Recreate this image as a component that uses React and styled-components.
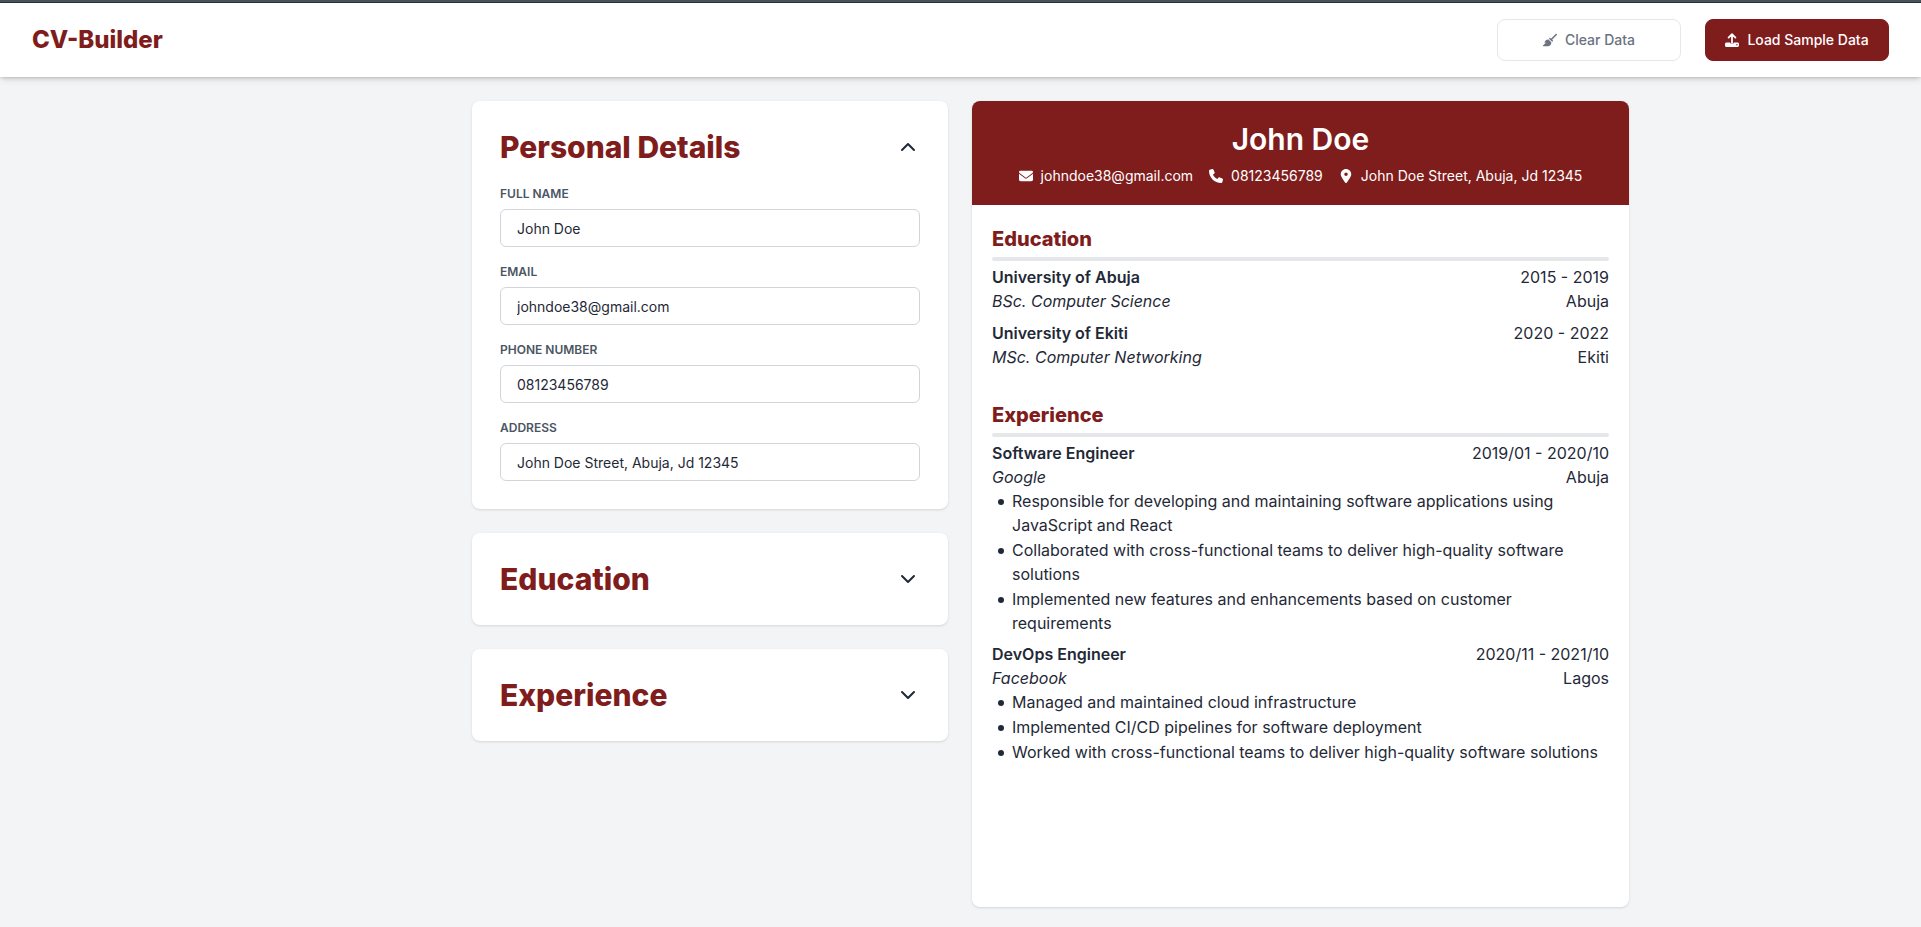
import React, { useState } from 'react';
import styled, { createGlobalStyle } from 'styled-components';
import { FaBroom, FaEnvelope, FaLocationDot, FaPhone } from 'react-icons/fa6';
import { FiChevronDown, FiChevronUp } from 'react-icons/fi';

const GlobalStyle = createGlobalStyle`
  *, *::before, *::after { box-sizing: border-box; }
  body {
    margin: 0;
    background: #f3f4f6;
    color: #1f2937;
    font-family: Inter, 'Liberation Sans', sans-serif;
    font-size: 16px;
    line-height: 24px;
  }
  h1, h2, h3, p, ul { margin: 0; }
  button, input { font: inherit; color: inherit; }
`;

const Page = styled.div`
  display: flex;
  flex-direction: column;
  min-height: 100vh;
`;

const Header = styled.header`
  display: flex;
  align-items: center;
  justify-content: space-between;
  padding: 17px 32px 16px;
  background: #fff;
  border-top: 2px solid #48525a;
  box-shadow: inset 0 1px 0 #26343a, 0 4px 6px -1px rgba(0, 0, 0, 0.1),
    0 2px 4px -2px rgba(0, 0, 0, 0.1), 0 1px 3px rgba(0, 0, 0, 0.1);
`;

const Brand = styled.h1`
  color: #7f1d1d;
  font-size: 24px;
  line-height: 32px;
  font-weight: 800;
`;

const Actions = styled.div`
  display: flex;
  gap: 24px;
`;

const ActionButton = styled.button`
  display: flex;
  align-items: center;
  justify-content: center;
  gap: 8px;
  width: 184px;
  height: 42px;
  padding: 0;
  border: 1px solid ${(p) => (p.$primary ? '#7f1d1d' : '#e5e7eb')};
  border-radius: 8px;
  background: ${(p) => (p.$primary ? '#7f1d1d' : '#fff')};
  color: ${(p) => (p.$primary ? '#fff' : '#6b7280')};
  font-size: 14px;
  line-height: 20px;
  font-weight: 500;
  cursor: pointer;

  svg {
    width: auto;
    height: 14px;
  }
`;

const Main = styled.main`
  flex: 1;
  display: grid;
  grid-template-columns: minmax(0, 476px) minmax(0, 657px);
  justify-content: center;
  gap: 24px;
  padding: 24px 0 20px 180px;
`;

const Editor = styled.div`
  display: flex;
  flex-direction: column;
  gap: 24px;
`;

const Card = styled.section`
  padding: 28px;
  border-radius: 8px;
  background: #fff;
  box-shadow: 0 1px 3px rgba(0, 0, 0, 0.1), 0 1px 2px -1px rgba(0, 0, 0, 0.1);
`;

const CardHeader = styled.div`
  display: flex;
  align-items: center;
  justify-content: space-between;
`;

const CardTitle = styled.h2`
  color: #7f1d1d;
  font-size: 30px;
  line-height: 36px;
  font-weight: 800;
`;

const Toggle = styled.button`
  display: flex;
  padding: 0;
  border: 0;
  background: none;
  cursor: pointer;
`;

const Fields = styled.form`
  display: flex;
  flex-direction: column;
  gap: 16px;
  padding-top: 20px;
`;

const Field = styled.div`
  display: flex;
  flex-direction: column;
  gap: 6px;
`;

const Label = styled.label`
  color: #4b5563;
  font-size: 12px;
  line-height: 18px;
  font-weight: 600;
  text-transform: uppercase;
`;

const TextInput = styled.input`
  width: 100%;
  height: 38px;
  padding: 0 16px;
  border: 1px solid #d1d5db;
  border-radius: 6px;
  background: #fff;
  font-size: 14px;
  line-height: 20px;
`;

const Preview = styled.article`
  border-radius: 8px;
  background: #fff;
  box-shadow: 0 1px 3px rgba(0, 0, 0, 0.1), 0 1px 2px -1px rgba(0, 0, 0, 0.1);
  overflow: hidden;
`;

const PreviewHeader = styled.header`
  display: flex;
  flex-direction: column;
  align-items: center;
  gap: 8px;
  padding: 20px 20px 18px;
  background: #7f1d1d;
  color: #fff;
`;

const PersonName = styled.h2`
  font-size: 30px;
  line-height: 36px;
  font-weight: 600;
`;

const Contacts = styled.div`
  display: flex;
  gap: 16px;
  font-size: 14px;
  line-height: 22px;
`;

const Contact = styled.span`
  display: flex;
  align-items: center;
  gap: 8px;

  svg {
    width: auto;
    height: 14px;
  }
`;

const PreviewBody = styled.div`
  display: flex;
  flex-direction: column;
  gap: 32px;
  padding: 20px;
`;

const SectionTitle = styled.h3`
  color: #7f1d1d;
  font-size: 20px;
  line-height: 28px;
  font-weight: 800;
`;

const Rule = styled.hr`
  height: 4px;
  margin: 4px 0;
  border: 0;
  border-radius: 2px;
  background: #e5e7eb;
`;

const Entries = styled.div`
  display: flex;
  flex-direction: column;
  gap: 8px;
`;

const EntryRow = styled.div`
  display: flex;
  justify-content: space-between;
`;

const EntryTitle = styled.p`
  font-weight: 600;
`;

const EntrySubtitle = styled.p`
  font-style: italic;
`;

const Bullets = styled.ul`
  display: flex;
  flex-direction: column;
  gap: 1px;
  margin-bottom: -1px;
  padding: 0;
  list-style: none;
`;

const Bullet = styled.li`
  display: flex;

  &::before {
    content: '';
    flex: none;
    width: 6px;
    height: 6px;
    margin: 10px 8px 0 6px;
    border-radius: 50%;
    background: currentColor;
  }
`;

const fields = [
  { id: 'name', label: 'Full name', type: 'text' },
  { id: 'email', label: 'Email', type: 'email' },
  { id: 'phone', label: 'Phone number', type: 'tel' },
  { id: 'address', label: 'Address', type: 'text' },
];

const sample = {
  name: 'John Doe',
  email: 'johndoe38@gmail.com',
  phone: '08123456789',
  address: 'John Doe Street, Abuja, Jd 12345',
};

const education = [
  { title: 'University of Abuja', dates: '2015 - 2019', subtitle: 'BSc. Computer Science', place: 'Abuja' },
  { title: 'University of Ekiti', dates: '2020 - 2022', subtitle: 'MSc. Computer Networking', place: 'Ekiti' },
];

const experience = [
  {
    title: 'Software Engineer',
    dates: '2019/01 - 2020/10',
    subtitle: 'Google',
    place: 'Abuja',
    points: [
      'Responsible for developing and maintaining software applications using JavaScript and React',
      'Collaborated with cross-functional teams to deliver high-quality software solutions',
      'Implemented new features and enhancements based on customer requirements',
    ],
  },
  {
    title: 'DevOps Engineer',
    dates: '2020/11 - 2021/10',
    subtitle: 'Facebook',
    place: 'Lagos',
    points: [
      'Managed and maintained cloud infrastructure',
      'Implemented CI/CD pipelines for software deployment',
      'Worked with cross-functional teams to deliver high-quality software solutions',
    ],
  },
];

const UploadIcon = () => (
  <svg viewBox="0 0 14 14" fill="none" aria-hidden="true">
    <path d="M7 10V1.6M3.6 4.6 7 1.2l3.4 3.4" stroke="currentColor" strokeWidth="1.8" strokeLinecap="round" strokeLinejoin="round" />
    <path
      fillRule="evenodd"
      d="M1.6 9.600h3.600c0 1 .8 1.400 1.800 1.400s1.800-.4 1.800-1.400h3.600c.9 0 1.600.6 1.600 1.500v1.400c0 .9-.7 1.500-1.600 1.500H1.600C.7 14 0 13.400 0 12.500v-1.400c0-.9.7-1.500 1.600-1.500zM11.900 11.100a.7.7 0 1 0 0 1.400.7.7 0 0 0 0-1.400z"
      fill="currentColor"
    />
  </svg>
);

function AccordionCard({ title, defaultOpen = false, children }) {
  const [open, setOpen] = useState(defaultOpen);
  return (
    <Card>
      <CardHeader>
        <CardTitle>{title}</CardTitle>
        <Toggle type="button" aria-label={`Toggle ${title}`} aria-expanded={open} onClick={() => setOpen(!open)}>
          {open ? <FiChevronUp size={24} /> : <FiChevronDown size={24} />}
        </Toggle>
      </CardHeader>
      {open && children}
    </Card>
  );
}

function PreviewSection({ title, entries }) {
  return (
    <section>
      <SectionTitle>{title}</SectionTitle>
      <Rule />
      <Entries>
        {entries.map((entry) => (
          <div key={entry.title}>
            <EntryRow>
              <EntryTitle>{entry.title}</EntryTitle>
              <p>{entry.dates}</p>
            </EntryRow>
            <EntryRow>
              <EntrySubtitle>{entry.subtitle}</EntrySubtitle>
              <p>{entry.place}</p>
            </EntryRow>
            {entry.points && (
              <Bullets>
                {entry.points.map((point) => (
                  <Bullet key={point}>{point}</Bullet>
                ))}
              </Bullets>
            )}
          </div>
        ))}
      </Entries>
    </section>
  );
}

export default function App() {
  const [person, setPerson] = useState(sample);
  return (
    <>
      <GlobalStyle />
      <Page>
        <Header>
          <Brand>CV-Builder</Brand>
          <Actions>
            <ActionButton type="button" onClick={() => setPerson({ name: '', email: '', phone: '', address: '' })}>
              <FaBroom />
              Clear Data
            </ActionButton>
            <ActionButton type="button" $primary onClick={() => setPerson(sample)}>
              <UploadIcon />
              Load Sample Data
            </ActionButton>
          </Actions>
        </Header>
        <Main>
          <Editor>
            <AccordionCard title="Personal Details" defaultOpen>
              <Fields>
                {fields.map(({ id, label, type }) => (
                  <Field key={id}>
                    <Label htmlFor={id}>{label}</Label>
                    <TextInput
                      id={id}
                      type={type}
                      value={person[id]}
                      onChange={(e) => setPerson({ ...person, [id]: e.target.value })}
                    />
                  </Field>
                ))}
              </Fields>
            </AccordionCard>
            <AccordionCard title="Education" />
            <AccordionCard title="Experience" />
          </Editor>
          <Preview>
            <PreviewHeader>
              <PersonName>{person.name}</PersonName>
              <Contacts>
                <Contact><FaEnvelope />{person.email}</Contact>
                <Contact><FaPhone />{person.phone}</Contact>
                <Contact><FaLocationDot />{person.address}</Contact>
              </Contacts>
            </PreviewHeader>
            <PreviewBody>
              <PreviewSection title="Education" entries={education} />
              <PreviewSection title="Experience" entries={experience} />
            </PreviewBody>
          </Preview>
        </Main>
      </Page>
    </>
  );
}
